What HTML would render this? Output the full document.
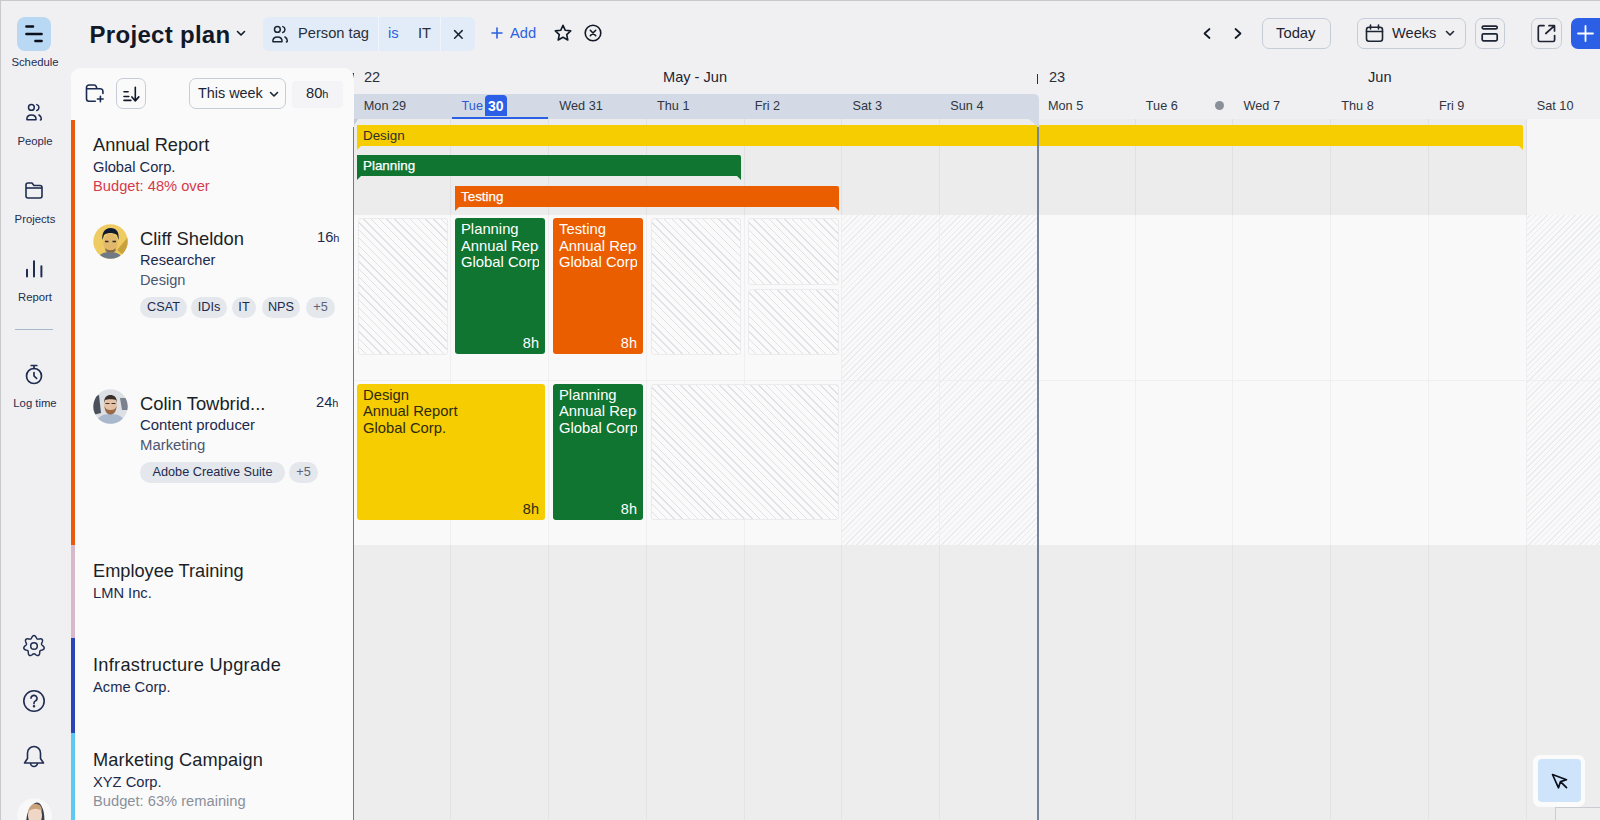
<!DOCTYPE html>
<html><head><meta charset="utf-8">
<style>
*{box-sizing:border-box;margin:0;padding:0}
html,body{width:1600px;height:820px;overflow:hidden}
body{position:relative;background:#f0f0f2;font-family:"Liberation Sans",sans-serif;color:#1d2433}
.a{position:absolute}
.t{position:absolute;white-space:nowrap;line-height:1}
svg{position:absolute;overflow:visible}
/* rail */
.rl{position:absolute;left:0;width:70px;text-align:center;font-size:11.3px;color:#1f2d50;line-height:1}
/* card */
#card{position:absolute;left:71px;top:68px;width:283px;height:760px;background:#fafafa;border-radius:9px 10px 0 0}
.btn{position:absolute;border:1px solid #c6cdd9;border-radius:7px;background:transparent}
/* timeline */
#tl{position:absolute;left:353px;top:119px;width:1247px;height:701px;overflow:hidden}
.bar{position:absolute;height:21px;font-size:13.4px;line-height:21px;padding-left:6px;white-space:nowrap;overflow:visible}
.blk{position:absolute;border-radius:3px;color:#fff;font-size:14.8px;line-height:16.6px;padding:3px 6px;white-space:nowrap}
.blk .in{overflow:hidden;width:100%}
.blk .h{position:absolute;right:6px;bottom:2px;font-size:14.5px}
.tag{position:absolute;height:21px;border-radius:11px;background:#e4e7ec;font-size:12.7px;line-height:21px;text-align:center;color:#1c2a4e;white-space:nowrap}
.hatch{position:absolute;border-radius:3px;border:1px solid #ebebed;background:repeating-linear-gradient(45deg,#fafafa 0 4.5px,#dfe1e4 4.5px 5.5px)}
</style></head>
<body>
<!-- borders -->
<div class="a" style="left:0;top:0;width:1600px;height:1px;background:#c9c9cc"></div>
<div class="a" style="left:0;top:0;width:1px;height:820px;background:#c9c9cc"></div>

<!-- RAIL -->
<div class="a" style="left:17px;top:17px;width:34px;height:34px;border-radius:8px;background:#b9d8f4"></div>
<svg style="left:17px;top:17px" width="34" height="34"><g stroke="#0b0f1a" stroke-width="2.5" stroke-linecap="round"><path d="M9.4 9.5h6.6M9.4 17h15.2M18.4 24h6.2"/></g></svg>
<div class="rl" style="top:57px">Schedule</div>

<svg style="left:25px;top:104px" width="18" height="17" viewBox="0 0 18 17" fill="none" stroke="#1b2a50" stroke-width="1.5" stroke-linecap="round" stroke-linejoin="round"><circle cx="6.4" cy="3.4" r="2.9"/><path d="M11.8 0.6a3.1 3.1 0 0 1 0 5.9"/><path d="M1.85 15.4C1.85 12.6 3.9 11.05 6.45 11.05S11.05 12.6 11.05 15.4a.3.3 0 0 1-.3.3H2.15a.3.3 0 0 1-.3-.3z"/><path d="M14 11a5 5 0 0 1 2.3 3.8q.1 1-.9 1.1"/></svg>
<div class="rl" style="top:136px">People</div>

<svg style="left:25px;top:182px" width="18" height="17" viewBox="0 0 18 17" fill="none" stroke="#1f2d50" stroke-width="1.6" stroke-linejoin="round"><path d="M1 3a2 2 0 0 1 2-2h4l2 2.5h6a2 2 0 0 1 2 2V14a2 2 0 0 1-2 2H3a2 2 0 0 1-2-2z"/><path d="M1 6h16"/></svg>
<div class="rl" style="top:214px">Projects</div>

<svg style="left:25px;top:259px" width="18" height="19" viewBox="0 0 18 19" fill="none" stroke="#1f2d50" stroke-width="2" stroke-linecap="round"><path d="M2 10.8v6.6M9 2.3v15.1M16.4 7.2v10.2"/></svg>
<div class="rl" style="top:292px">Report</div>

<div class="a" style="left:15px;top:329px;width:38px;height:1px;background:#a9b6cc"></div>

<svg style="left:25px;top:364px" width="18" height="21" viewBox="0 0 18 21" fill="none" stroke="#1f2d50" stroke-width="1.7" stroke-linecap="round"><circle cx="9" cy="12" r="7.5"/><path d="M6.2 1.5h5.6M9 1.5v3M9 8.5v3.5l2.6 2.4"/></svg>
<div class="rl" style="top:398px">Log time</div>

<svg style="left:23px;top:635px" width="22" height="22" viewBox="0 0 22 22" fill="none" stroke="#1f2d50" stroke-width="1.5" stroke-linejoin="round"><circle cx="11" cy="11" r="3.3"/><path d="M11.00 0.55 L11.47 0.63 L11.91 0.85 L12.33 1.20 L12.70 1.64 L13.02 2.13 L13.31 2.63 L13.57 3.10 L13.81 3.50 L14.07 3.81 L14.36 4.02 L14.70 4.12 L15.11 4.13 L15.58 4.07 L16.10 3.98 L16.67 3.89 L17.26 3.83 L17.84 3.85 L18.37 3.96 L18.82 4.17 L19.17 4.48 L19.40 4.90 L19.51 5.39 L19.49 5.93 L19.38 6.49 L19.20 7.05 L18.98 7.59 L18.78 8.08 L18.62 8.53 L18.53 8.92 L18.56 9.28 L18.69 9.60 L18.94 9.93 L19.27 10.26 L19.67 10.61 L20.10 11.00 L20.51 11.43 L20.85 11.89 L21.10 12.37 L21.22 12.85 L21.19 13.33 L21.01 13.76 L20.69 14.15 L20.26 14.48 L19.75 14.74 L19.20 14.95 L18.65 15.11 L18.13 15.26 L17.68 15.41 L17.32 15.59 L17.06 15.83 L16.89 16.14 L16.79 16.53 L16.74 17.00 L16.71 17.54 L16.67 18.11 L16.59 18.70 L16.45 19.26 L16.23 19.75 L15.92 20.14 L15.53 20.42 L15.08 20.55 L14.58 20.54 L14.06 20.41 L13.53 20.17 L13.02 19.87 L12.55 19.54 L12.12 19.23 L11.72 18.98 L11.35 18.81 L11.00 18.75 L10.65 18.81 L10.28 18.98 L9.88 19.23 L9.45 19.54 L8.98 19.87 L8.47 20.17 L7.94 20.41 L7.42 20.54 L6.92 20.55 L6.47 20.42 L6.08 20.14 L5.77 19.75 L5.55 19.26 L5.41 18.70 L5.33 18.11 L5.29 17.54 L5.26 17.00 L5.21 16.53 L5.11 16.14 L4.94 15.83 L4.68 15.59 L4.32 15.41 L3.87 15.26 L3.35 15.11 L2.80 14.95 L2.25 14.74 L1.74 14.48 L1.31 14.15 L0.99 13.76 L0.81 13.33 L0.78 12.85 L0.90 12.37 L1.15 11.89 L1.49 11.43 L1.90 11.00 L2.33 10.61 L2.73 10.26 L3.06 9.93 L3.31 9.60 L3.44 9.28 L3.47 8.92 L3.38 8.53 L3.22 8.08 L3.02 7.59 L2.80 7.05 L2.62 6.49 L2.51 5.93 L2.49 5.39 L2.60 4.90 L2.83 4.48 L3.18 4.17 L3.63 3.96 L4.16 3.85 L4.74 3.83 L5.33 3.89 L5.90 3.98 L6.42 4.07 L6.89 4.13 L7.30 4.12 L7.64 4.02 L7.93 3.81 L8.19 3.50 L8.43 3.10 L8.69 2.63 L8.98 2.13 L9.30 1.64 L9.67 1.20 L10.09 0.85 L10.53 0.63Z"/></svg>
<svg style="left:23px;top:690px" width="22" height="22" viewBox="0 0 22 22" fill="none" stroke="#1f2d50" stroke-width="1.6" stroke-linecap="round"><circle cx="11" cy="11" r="10.2"/><path d="M8 8.3a3 3 0 1 1 4.2 2.8c-.8.4-1.2 1-1.2 1.9v.8"/><circle cx="11" cy="16.3" r=".5" fill="#1f2d50"/></svg>
<svg style="left:23px;top:745px" width="22" height="23" viewBox="0 0 22 23" fill="none" stroke="#1f2d50" stroke-width="1.6" stroke-linejoin="round"><path d="M11 1.5a6.5 6.5 0 0 1 6.5 6.5v5.5l3 4.5h-19l3-4.5V8A6.5 6.5 0 0 1 11 1.5z"/><path d="M7.5 18a3.5 3.5 0 0 0 7 0"/></svg>
<svg style="left:17px;top:797.5px" width="35" height="35" viewBox="0 0 35 35"><circle cx="17.5" cy="17.5" r="17.3" fill="#f8f8f9"/><path d="M9.5 35c-1-12 0-19 3-24s8-10 12-3 3 16 2 27z" fill="#3a3f4a"/><ellipse cx="18" cy="17" rx="7" ry="10" fill="#f0d6c4"/><path d="M11 14c1-6 5-9 9-8s5 4 5 7c-3-2-9-4-14 1z" fill="#c8a27a"/></svg>

<!-- HEADER -->
<div class="t" style="left:89.5px;top:22.5px;font-size:24px;font-weight:bold;letter-spacing:0.3px;color:#111827">Project plan</div>
<svg style="left:236px;top:30px" width="10" height="7" viewBox="0 0 10 7" fill="none" stroke="#111827" stroke-width="1.6" stroke-linecap="round" stroke-linejoin="round"><path d="M1.5 1.5L5 5l3.5-3.5"/></svg>

<div class="a" style="left:263px;top:17px;width:212px;height:34px;border-radius:6px;background:#e1ecf8"></div>
<div class="a" style="left:378px;top:17px;width:1px;height:34px;background:#f0f5fb"></div>
<div class="a" style="left:440px;top:17px;width:1px;height:34px;background:#f0f5fb"></div>
<svg style="left:271px;top:25.5px" width="18" height="17" viewBox="0 0 18 17" fill="none" stroke="#1d2433" stroke-width="1.5" stroke-linecap="round" stroke-linejoin="round"><circle cx="6.4" cy="3.4" r="2.9"/><path d="M11.8 0.6a3.1 3.1 0 0 1 0 5.9"/><path d="M1.85 15.4C1.85 12.6 3.9 11.05 6.45 11.05S11.05 12.6 11.05 15.4a.3.3 0 0 1-.3.3H2.15a.3.3 0 0 1-.3-.3z"/><path d="M14 11a5 5 0 0 1 2.3 3.8q.1 1-.9 1.1"/></svg>
<div class="t" style="left:298px;top:26px;font-size:14.7px;color:#2a2f3a">Person tag</div>
<div class="t" style="left:388px;top:26px;font-size:14.7px;color:#2a62e0">is</div>
<div class="t" style="left:418px;top:26px;font-size:14.7px;color:#2a2f3a">IT</div>
<svg style="left:453px;top:28.5px" width="11" height="11" viewBox="0 0 11 11" stroke="#1d2433" stroke-width="1.5" stroke-linecap="round"><path d="M1.6 1.6l7.6 7.6M9.2 1.6l-7.6 7.6"/></svg>
<svg style="left:491px;top:27px" width="12" height="12" viewBox="0 0 12 12" stroke="#2a62e0" stroke-width="1.6" stroke-linecap="round"><path d="M6 1v10M1 6h10"/></svg>
<div class="t" style="left:510px;top:26px;font-size:14.7px;color:#2a62e0">Add</div>
<svg style="left:554px;top:24px" width="18" height="18" viewBox="0 0 18 18" fill="none" stroke="#111827" stroke-width="1.6" stroke-linejoin="round"><path d="M9 1.3l2.3 5 5.4.6-4 3.7 1.1 5.4L9 13.3 4.2 16l1.1-5.4-4-3.7 5.4-.6z"/></svg>
<svg style="left:584px;top:24px" width="18" height="18" viewBox="0 0 18 18" fill="none" stroke="#111827" stroke-width="1.6" stroke-linecap="round"><circle cx="9" cy="9" r="7.8"/><path d="M6.3 6.3l5.4 5.4M11.7 6.3l-5.4 5.4"/></svg>

<svg style="left:1202px;top:28px" width="10" height="11" viewBox="0 0 10 11" fill="none" stroke="#111827" stroke-width="1.7" stroke-linecap="round" stroke-linejoin="round"><path d="M7.5 1L2.5 5.5 7.5 10"/></svg>
<svg style="left:1233px;top:28px" width="10" height="11" viewBox="0 0 10 11" fill="none" stroke="#111827" stroke-width="1.7" stroke-linecap="round" stroke-linejoin="round"><path d="M2.5 1l5 4.5-5 4.5"/></svg>
<div class="btn" style="left:1262px;top:18px;width:69px;height:31px"></div>
<div class="t" style="left:1276px;top:26px;font-size:14.8px;color:#1d2433">Today</div>
<div class="btn" style="left:1357px;top:18px;width:109px;height:31px"></div>
<svg style="left:1365px;top:24px" width="19" height="19" viewBox="0 0 19 19" fill="none" stroke="#1d2433" stroke-width="1.6" stroke-linecap="round"><rect x="1.5" y="3.2" width="16" height="14" rx="2.5"/><path d="M5.5 1v4M13.5 1v4M1.5 7.5h16"/></svg>
<div class="t" style="left:1392px;top:26px;font-size:14.6px;color:#1d2433">Weeks</div>
<svg style="left:1445px;top:30px" width="10" height="7" viewBox="0 0 10 7" fill="none" stroke="#1d2433" stroke-width="1.6" stroke-linecap="round" stroke-linejoin="round"><path d="M1.5 1.5L5 5l3.5-3.5"/></svg>
<div class="btn" style="left:1475px;top:18px;width:30px;height:31px"></div>
<svg style="left:1480px;top:24px" width="20" height="19" viewBox="0 0 20 19" fill="none" stroke="#1d2433" stroke-width="1.7"><rect x="2.2" y="2.1" width="15" height="2.8" rx="1.4"/><rect x="2.2" y="9.8" width="15" height="7" rx="1.3"/></svg>
<div class="btn" style="left:1531px;top:18px;width:31px;height:31px"></div>
<svg style="left:1537px;top:24px" width="19" height="19" viewBox="0 0 19 19" fill="none" stroke="#1d2433" stroke-width="1.7" stroke-linecap="round" stroke-linejoin="round"><path d="M7 1.7H2.8a1.5 1.5 0 0 0-1.5 1.5V16a1.5 1.5 0 0 0 1.5 1.5h13.3a1.5 1.5 0 0 0 1.5-1.5v-4.5M12 1.7h5.5V7M17.3 1.8L8.8 9.5"/></svg>
<div class="a" style="left:1571px;top:18px;width:40px;height:31px;border-radius:7px;background:#2b5fe5"></div>
<svg style="left:1576px;top:24px" width="19" height="19" viewBox="0 0 19 19" stroke="#fff" stroke-width="1.8" stroke-linecap="round"><path d="M9.5 2v15M2 9.5h15"/></svg>

<!-- TIMELINE -->
<div class="a" style="left:352px;top:73px;width:1.6px;height:10px;background:#26304f"></div>
<div class="t" style="left:364px;top:70px;font-size:14.6px;color:#2a2f3a">22</div>
<div class="t" style="left:663px;top:70px;font-size:14.6px;color:#1d2433">May - Jun</div>
<div class="a" style="left:1036.5px;top:73.5px;width:1.6px;height:10px;background:#26304f"></div>
<div class="t" style="left:1049px;top:70px;font-size:14.6px;color:#2a2f3a">23</div>
<div class="t" style="left:1368px;top:70px;font-size:14.6px;color:#1d2433">Jun</div>
<div class="a" style="left:353px;top:94px;width:686px;height:25.5px;background:#d3dae5;border-radius:0 5px 0 0"></div>
<div class="t" style="left:363.8px;top:100px;font-size:12.7px;color:#2f3542">Mon 29</div>
<div class="t" style="left:461.6px;top:100px;font-size:12.7px;color:#2a5bd7">Tue</div>
<div class="a" style="left:485px;top:95px;width:22px;height:21px;border-radius:4px 4px 0 0;background:#2b5fe5"></div>
<div class="t" style="left:488px;top:99px;font-size:14px;font-weight:bold;color:#fff">30</div>
<div class="a" style="left:452px;top:117px;width:96px;height:2px;background:#2b5fe5"></div>
<div class="t" style="left:559.3px;top:100px;font-size:12.7px;color:#2f3542">Wed 31</div>
<div class="t" style="left:657.0px;top:100px;font-size:12.7px;color:#2f3542">Thu 1</div>
<div class="t" style="left:754.8px;top:100px;font-size:12.7px;color:#2f3542">Fri 2</div>
<div class="t" style="left:852.5px;top:100px;font-size:12.7px;color:#2f3542">Sat 3</div>
<div class="t" style="left:950.3px;top:100px;font-size:12.7px;color:#2f3542">Sun 4</div>
<div class="t" style="left:1048.0px;top:100px;font-size:12.7px;color:#2f3542">Mon 5</div>
<div class="t" style="left:1145.8px;top:100px;font-size:12.7px;color:#2f3542">Tue 6</div>
<div class="t" style="left:1243.5px;top:100px;font-size:12.7px;color:#2f3542">Wed 7</div>
<div class="t" style="left:1341.3px;top:100px;font-size:12.7px;color:#2f3542">Thu 8</div>
<div class="t" style="left:1439.0px;top:100px;font-size:12.7px;color:#2f3542">Fri 9</div>
<div class="t" style="left:1536.8px;top:100px;font-size:12.7px;color:#2f3542">Sat 10</div>
<div class="a" style="left:1215px;top:101px;width:9px;height:9px;border-radius:50%;background:#8a8f98"></div>
<div class="a" style="left:354px;top:119px;width:1172.0px;height:96px;background:#ececed"></div>
<div class="a" style="left:1526.0px;top:119px;width:80px;height:96px;background:#f6f6f7"></div>
<div class="a" style="left:354px;top:215px;width:1246px;height:330px;background:#f9f9f9"></div>
<div class="a" style="left:841.8px;top:215px;width:195.5px;height:330px;background:repeating-linear-gradient(-45deg,transparent 0 3px,#eaebee 3px 4px)"></div>
<div class="a" style="left:1526.0px;top:215px;width:97.8px;height:330px;background:repeating-linear-gradient(-45deg,transparent 0 3px,#eaebee 3px 4px)"></div>
<div class="a" style="left:354px;top:545px;width:1246px;height:275px;background:#ededed"></div>
<div class="a" style="left:450.2px;top:119px;width:1px;height:96px;background:#e1e1e3"></div>
<div class="a" style="left:450.2px;top:215px;width:1px;height:330px;background:#efeff1"></div>
<div class="a" style="left:450.2px;top:545px;width:1px;height:275px;background:#e3e3e5"></div>
<div class="a" style="left:548.0px;top:119px;width:1px;height:96px;background:#e1e1e3"></div>
<div class="a" style="left:548.0px;top:215px;width:1px;height:330px;background:#efeff1"></div>
<div class="a" style="left:548.0px;top:545px;width:1px;height:275px;background:#e3e3e5"></div>
<div class="a" style="left:645.8px;top:119px;width:1px;height:96px;background:#e1e1e3"></div>
<div class="a" style="left:645.8px;top:215px;width:1px;height:330px;background:#efeff1"></div>
<div class="a" style="left:645.8px;top:545px;width:1px;height:275px;background:#e3e3e5"></div>
<div class="a" style="left:743.5px;top:119px;width:1px;height:96px;background:#e1e1e3"></div>
<div class="a" style="left:743.5px;top:215px;width:1px;height:330px;background:#efeff1"></div>
<div class="a" style="left:743.5px;top:545px;width:1px;height:275px;background:#e3e3e5"></div>
<div class="a" style="left:841.2px;top:119px;width:1px;height:96px;background:#e1e1e3"></div>
<div class="a" style="left:841.2px;top:215px;width:1px;height:330px;background:#efeff1"></div>
<div class="a" style="left:841.2px;top:545px;width:1px;height:275px;background:#e3e3e5"></div>
<div class="a" style="left:939.0px;top:119px;width:1px;height:96px;background:#e1e1e3"></div>
<div class="a" style="left:939.0px;top:215px;width:1px;height:330px;background:#efeff1"></div>
<div class="a" style="left:939.0px;top:545px;width:1px;height:275px;background:#e3e3e5"></div>
<div class="a" style="left:1036.8px;top:119px;width:1px;height:96px;background:#e1e1e3"></div>
<div class="a" style="left:1036.8px;top:215px;width:1px;height:330px;background:#efeff1"></div>
<div class="a" style="left:1036.8px;top:545px;width:1px;height:275px;background:#e3e3e5"></div>
<div class="a" style="left:1134.5px;top:119px;width:1px;height:96px;background:#e1e1e3"></div>
<div class="a" style="left:1134.5px;top:215px;width:1px;height:330px;background:#efeff1"></div>
<div class="a" style="left:1134.5px;top:545px;width:1px;height:275px;background:#e3e3e5"></div>
<div class="a" style="left:1232.2px;top:119px;width:1px;height:96px;background:#e1e1e3"></div>
<div class="a" style="left:1232.2px;top:215px;width:1px;height:330px;background:#efeff1"></div>
<div class="a" style="left:1232.2px;top:545px;width:1px;height:275px;background:#e3e3e5"></div>
<div class="a" style="left:1330.0px;top:119px;width:1px;height:96px;background:#e1e1e3"></div>
<div class="a" style="left:1330.0px;top:215px;width:1px;height:330px;background:#efeff1"></div>
<div class="a" style="left:1330.0px;top:545px;width:1px;height:275px;background:#e3e3e5"></div>
<div class="a" style="left:1427.8px;top:119px;width:1px;height:96px;background:#e1e1e3"></div>
<div class="a" style="left:1427.8px;top:215px;width:1px;height:330px;background:#efeff1"></div>
<div class="a" style="left:1427.8px;top:545px;width:1px;height:275px;background:#e3e3e5"></div>
<div class="a" style="left:1525.5px;top:119px;width:1px;height:96px;background:#e1e1e3"></div>
<div class="a" style="left:1525.5px;top:215px;width:1px;height:330px;background:#efeff1"></div>
<div class="a" style="left:1525.5px;top:545px;width:1px;height:275px;background:#e3e3e5"></div>
<div class="a" style="left:354px;top:380px;width:1246px;height:1px;background:#efeff1"></div>
<div class="bar" style="left:357px;top:125px;width:1166px;background:#f6cd00;color:#2f2f2a;border-radius:0 2px 0 0">Design</div>
<svg style="left:357px;top:146px" width="5" height="4"><path d="M0 0h4L0 4z" fill="#f6cd00"/></svg>
<svg style="left:1518px;top:146px" width="5" height="4"><path d="M1 0h4v4z" fill="#f6cd00"/></svg>
<div class="bar" style="left:357px;top:155px;width:384px;background:#0f7530;color:#fff;-webkit-text-stroke:0.25px #fff;border-radius:0 2px 0 0">Planning</div>
<svg style="left:357px;top:176px" width="5" height="4"><path d="M0 0h4L0 4z" fill="#0f7530"/></svg>
<svg style="left:736px;top:176px" width="5" height="4"><path d="M1 0h4v4z" fill="#0f7530"/></svg>
<div class="bar" style="left:455px;top:186px;width:384px;background:#eb5e00;color:#fff;-webkit-text-stroke:0.25px #fff;border-radius:0 2px 0 0">Testing</div>
<svg style="left:455px;top:207px" width="5" height="4"><path d="M0 0h4L0 4z" fill="#eb5e00"/></svg>
<svg style="left:834px;top:207px" width="5" height="4"><path d="M1 0h4v4z" fill="#eb5e00"/></svg>
<div class="hatch" style="left:358px;top:218px;width:90px;height:137px"></div>
<div class="blk" style="left:455px;top:218px;width:90px;height:136px;background:#0f7530;color:#fff"><div class="in">Planning<br>Annual Report<br>Global Corp.</div><span class="h">8h</span></div>
<div class="blk" style="left:553px;top:218px;width:90px;height:136px;background:#eb5e00;color:#fff"><div class="in">Testing<br>Annual Report<br>Global Corp.</div><span class="h">8h</span></div>
<div class="hatch" style="left:651px;top:218px;width:90px;height:137px"></div>
<div class="hatch" style="left:748px;top:218px;width:91px;height:67px"></div>
<div class="hatch" style="left:748px;top:289px;width:91px;height:66px"></div>
<div class="blk" style="left:357px;top:383.5px;width:188px;height:136px;background:#f6cd00;color:#2e2a10"><div class="in">Design<br>Annual Report<br>Global Corp.</div><span class="h">8h</span></div>
<div class="blk" style="left:553px;top:383.5px;width:90px;height:136px;background:#0f7530;color:#fff"><div class="in">Planning<br>Annual Report<br>Global Corp.</div><span class="h">8h</span></div>
<div class="hatch" style="left:651px;top:383.5px;width:188px;height:136.5px"></div>
<div class="a" style="left:353px;top:119px;width:5px;height:8px;background:#c3cad6;clip-path:polygon(0 0,100% 0,0 100%)"></div>
<div class="a" style="left:1028.5px;top:119px;width:10.5px;height:8.5px;background:#d3dae5;clip-path:polygon(0 0,100% 0,100% 100%)"></div>
<div class="a" style="left:1037.2px;top:127px;width:1.7px;height:693px;background:#76839c"></div>
<div class="a" style="left:1533px;top:755px;width:52px;height:52px;border-radius:7px;background:#fbfbfc"></div>
<div class="a" style="left:1538px;top:759px;width:43px;height:43px;border-radius:4px;background:#cde4fa"></div>
<svg style="left:1550px;top:772px" width="20" height="20" viewBox="0 0 20 20" fill="none" stroke="#0b0f1a" stroke-width="1.7" stroke-linejoin="round" stroke-linecap="round"><path d="M2.5 2.5l14 5.3-6 1.8-2 6.2z M10.5 9.6l6 6"/></svg>
<div class="a" style="left:1555px;top:807px;width:45px;height:13px;background:#eeeeee;border-top:1px solid #c9cdd2;border-left:1px solid #c9cdd2"></div>
<!-- CARD -->
<div id="card"></div>
<div class="a" style="left:353px;top:127px;width:1px;height:693px;background:#6b7a99"></div>
<svg style="left:84px;top:82px" width="22" height="22" viewBox="0 0 22 22" fill="none" stroke="#1b2a50" stroke-width="1.6" stroke-linecap="round" stroke-linejoin="round"><path d="M11.3 19.3H5a2.5 2.5 0 0 1-2.5-2.5V5.5A2.5 2.5 0 0 1 5 3h5.3a2 2 0 0 1 1.8 1.2l.9 2.6h3.4a2.5 2.5 0 0 1 2.5 2.5v2.1M2.5 6.8h14M13.4 17h5.7M16.4 14.2v5.6"/></svg>
<div class="btn" style="left:116px;top:78px;width:30px;height:31px;background:#fafafa"></div>
<svg style="left:121px;top:84px" width="20" height="19" viewBox="0 0 20 19" fill="none" stroke="#111827" stroke-width="1.6" stroke-linecap="round" stroke-linejoin="round"><path d="M3 7.8h4.1M3 12.5h4.8M3 16.4h6.9M14.3 3.2v13.7M10.9 12.9l3.4 4 3.5-4"/></svg>
<div class="btn" style="left:189px;top:78px;width:97px;height:31px;background:#fafafa"></div>
<div class="t" style="left:198px;top:86px;font-size:14.4px;color:#1d2433">This week</div>
<svg style="left:269px;top:91px" width="10" height="7" viewBox="0 0 10 7" fill="none" stroke="#1d2433" stroke-width="1.6" stroke-linecap="round" stroke-linejoin="round"><path d="M1.5 1.5L5 5l3.5-3.5"/></svg>
<div class="a" style="left:292px;top:81px;width:51px;height:27px;border-radius:4px;background:#f4f4f6"></div>
<div class="t" style="left:306px;top:86px;font-size:14.7px;color:#1d2433">80<span style="font-size:11px">h</span></div>

<!-- project bars -->
<div class="a" style="left:71px;top:120px;width:4px;height:425px;background:#ea5a0c"></div>
<div class="a" style="left:71px;top:545px;width:4px;height:93px;background:#d8b9cc"></div>
<div class="a" style="left:71px;top:638px;width:4px;height:95px;background:#2a43b6"></div>
<div class="a" style="left:71px;top:733px;width:4px;height:87px;background:#5dc9f2"></div>

<div class="t" style="left:93px;top:136px;font-size:18.2px;color:#1b1f27">Annual Report</div>
<div class="t" style="left:93px;top:160px;font-size:14.7px;color:#1c2a4e">Global Corp.</div>
<div class="t" style="left:93px;top:179px;font-size:14.7px;color:#d53a4c">Budget: 48% over</div>

<svg style="left:92.5px;top:223.5px" width="35" height="35" viewBox="0 0 35 35"><defs><clipPath id="c1"><circle cx="17.5" cy="17.5" r="17.2"/></clipPath></defs><g clip-path="url(#c1)"><rect width="35" height="35" fill="#efcc63"/><path d="M35 13L24 26 35 35z" fill="#c9a23c"/><path d="M5 35c1-5 5-7 12-7s11 2 12 7z" fill="#6f7a86"/><ellipse cx="17.5" cy="19" rx="7.2" ry="9.5" fill="#e2b86a"/><path d="M9.5 16c-1-7 2-12 8-12s9 4 8 12l-1.5-5c-2-1.5-5-2-6.5-2s-5 .5-6.5 2z" fill="#0f1a33"/><path d="M12 17.5h3.5M19.5 17.5h3.5" stroke="#2a2a3a" stroke-width="1.3"/><path d="M12.5 24c2 3 8 3 10 0v3c-2 2-8 2-10 0z" fill="#5b4a40" opacity=".7"/></g></svg>
<div class="t" style="left:140px;top:230px;font-size:18.4px;color:#1b1f27">Cliff Sheldon</div>
<div class="t" style="left:317px;top:230px;font-size:14.7px;color:#1c2a4e">16<span style="font-size:11px">h</span></div>
<div class="t" style="left:140px;top:253px;font-size:14.6px;color:#1c2a4e">Researcher</div>
<div class="t" style="left:140px;top:273px;font-size:14.6px;color:#4b5671">Design</div>
<div class="tag" style="left:140px;top:297px;width:47px">CSAT</div>
<div class="tag" style="left:191px;top:297px;width:36px">IDIs</div>
<div class="tag" style="left:232px;top:297px;width:24px">IT</div>
<div class="tag" style="left:262px;top:297px;width:38px">NPS</div>
<div class="tag" style="left:306px;top:297px;width:29px;color:#5b6476">+5</div>

<svg style="left:92.5px;top:389px" width="35" height="35" viewBox="0 0 35 35"><defs><clipPath id="c2"><circle cx="17.5" cy="17.5" r="17.2"/></clipPath></defs><g clip-path="url(#c2)"><rect width="35" height="35" fill="#dcdfe3"/><path d="M0 8l6-2 2 18-8 2z" fill="#4a505c"/><path d="M27 9h8v12h-6z" fill="#7b828e"/><path d="M3 35c1-7 6-10 14.5-10S31 28 32 35z" fill="#a9b8cc"/><ellipse cx="17.5" cy="15.5" rx="6.5" ry="8" fill="#e4c2a6"/><path d="M11 14c0-6 3-8 6.5-8s6.5 2 6.5 8l-1-3c-2-1-9-1-11 0z" fill="#3a302b"/><path d="M11.5 17c0 6 3 8.5 6 8.5s6-2.5 6-8.5c-1 3-3 4-6 4s-5-1-6-4z" fill="#9a6a48"/><path d="M12.5 14.5h4M18.5 14.5h4" stroke="#333" stroke-width="1.1"/></g></svg>
<div class="t" style="left:140px;top:395px;font-size:18.4px;color:#1b1f27">Colin Towbrid...</div>
<div class="t" style="left:316px;top:395px;font-size:14.7px;color:#1c2a4e">24<span style="font-size:11px">h</span></div>
<div class="t" style="left:140px;top:418px;font-size:14.9px;color:#1c2a4e">Content producer</div>
<div class="t" style="left:140px;top:438px;font-size:14.9px;color:#4b5671">Marketing</div>
<div class="tag" style="left:140px;top:462px;width:145px">Adobe Creative Suite</div>
<div class="tag" style="left:289px;top:462px;width:29px;color:#5b6476">+5</div>

<div class="t" style="left:93px;top:562px;font-size:18.2px;color:#1b1f27">Employee Training</div>
<div class="t" style="left:93px;top:586px;font-size:14.7px;color:#1c2a4e">LMN Inc.</div>
<div class="t" style="left:93px;top:656px;font-size:18.2px;letter-spacing:0.28px;color:#1b1f27">Infrastructure Upgrade</div>
<div class="t" style="left:93px;top:680px;font-size:14.7px;color:#1c2a4e">Acme Corp.</div>
<div class="t" style="left:93px;top:751px;font-size:18.2px;letter-spacing:0.12px;color:#1b1f27">Marketing Campaign</div>
<div class="t" style="left:93px;top:775px;font-size:14.7px;color:#1c2a4e">XYZ Corp.</div>
<div class="t" style="left:93px;top:794px;font-size:14.7px;color:#8a909b">Budget: 63% remaining</div>
</body></html>
